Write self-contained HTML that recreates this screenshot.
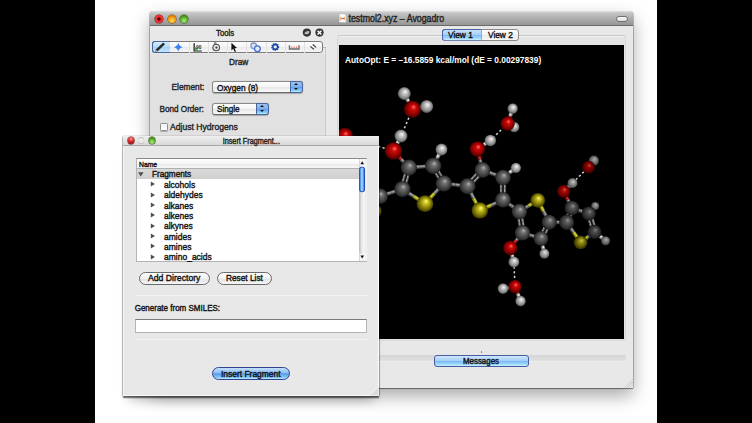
<!DOCTYPE html>
<html><head><meta charset="utf-8">
<style>
*{margin:0;padding:0;box-sizing:border-box}
html,body{width:752px;height:423px;overflow:hidden;background:#000}
body{position:relative;font-family:"Liberation Sans",sans-serif;color:#000}
.a{position:absolute}
#stage{left:95px;top:0;width:562px;height:423px;background:#fff;overflow:hidden}
.t{position:absolute;white-space:nowrap;line-height:1;-webkit-text-stroke:0.35px currentColor;color:#111;transform:scaleY(1.14);transform-origin:0 85%}
.win{position:absolute;left:150px;top:11px;width:483.3px;height:377px;background:#e8e8e8;box-shadow:0 1px 1px rgba(0,0,0,.35),0 8px 18px rgba(0,0,0,.34),-.6px 0 0 rgba(0,0,0,.35),.6px 0 0 rgba(0,0,0,.35),0 .6px 0 rgba(0,0,0,.35);border-radius:4px 4px 0 0}
.title{position:absolute;left:0;top:0;width:100%;height:14.5px;background:linear-gradient(#e0e0e0,#c4c4c4 15%,#aaaaaa 60%,#969696);border-bottom:1.5px solid #6a6a6a;border-radius:4px 4px 0 0}
.btn{position:absolute;width:9px;height:9px;border-radius:50%}
.red{background:radial-gradient(circle at 50% 30%,#ffd0c8 0,#f05050 22%,#d01818 55%,#900000 85%,#600000 100%);box-shadow:0 0 0 .6px #6a2020}
.orn{background:radial-gradient(circle at 50% 70%,#ffe060 0,#f8b020 35%,#e08000 70%,#a05000 100%);box-shadow:0 0 0 .6px #7a4a10}
.grn{background:radial-gradient(circle at 50% 70%,#b0f080 0,#70c040 35%,#409010 70%,#205800 100%);box-shadow:0 0 0 .6px #2a5a10}
.gry{background:radial-gradient(circle at 50% 40%,#f4f4f4 0,#e0e0e0 60%,#c0c0c0 100%);box-shadow:0 0 0 .6px #9a9a9a}
.dlg{position:absolute;left:123.3px;top:136px;width:255.3px;height:260px;background:#e8e8e8;box-shadow:inset 0 -1px 0 #f8f8f8,inset 1px 0 0 #f4f4f4,inset -1.2px 0 0 #fbfbfb,0 1.5px 1.2px rgba(0,0,0,.6),0 11px 10px -6px rgba(0,0,0,.22),-.7px 0 0 rgba(0,0,0,.25),.7px 0 0 rgba(0,0,0,.3),0 -.5px 0 rgba(0,0,0,.15)}
.dtitle{position:absolute;left:0;top:0;width:100%;height:10px;background:linear-gradient(#f0f0f0,#d8d8d8);border-bottom:1px solid #a8a8a8}
.pbtn{position:absolute;border:1px solid #6a6a6a;border-radius:7px;background:linear-gradient(#fff,#f0f0f0 50%,#e2e2e2 51%,#f6f6f6);}
.bbtn{position:absolute;border:1px solid #34448e;border-radius:7px;background:linear-gradient(#c4e0fc,#8cbef4 45%,#5c9ae6 52%,#7cc0f6 80%,#b4ecff);}
.sep{position:absolute;height:1px;background:#c8c8c8;border-bottom:1px solid #f4f4f4}
.blue{background:linear-gradient(#9cc4f4,#7eb0ec 45%,#5c9ae6 50%,#88ccf8 85%,#c0f4ff)}
.arr{position:absolute;width:0;height:0;border-left:2px solid transparent;border-right:2px solid transparent}
</style></head><body>
<div class="a" id="stage"></div>

<!-- main window -->
<div class="win">
  <div class="title"></div>
  <div class="btn red" style="left:5px;top:3.6px;width:8px;height:8px;background:radial-gradient(circle at 50% 50%,#300000 0,#500000 18%,#e02020 38%,#ff4040 55%,#c00000 80%,#800000 100%)"></div>
  <div class="btn orn" style="left:17.5px;top:3.6px;width:8px;height:8px"></div>
  <div class="btn grn" style="left:30.3px;top:3.6px;width:8px;height:8px"></div>
  <div class="a" style="left:466px;top:4.6px;width:12px;height:6px;border:1px solid #707070;border-radius:3px;background:linear-gradient(#fafafa,#dcdcdc)"></div>
  <svg class="a" style="left:189px;top:3px" width="8" height="9" viewBox="0 0 8 9"><path d="M.4 0 H5.4 L7 1.6 V8.2 H.4Z" fill="#fafafa" stroke="#c8c8c8" stroke-width=".4"/><path d="M1.2 2.5 L3.7 4.6 L6.2 2.5 L6.2 6.6 L3.7 4.6 L1.2 6.6Z" fill="#f0a060"/><path d="M3 3.4 L3.7 4.6 L4.4 3.4 L4.6 5.8 L3.7 4.6 L2.8 5.8Z" fill="#555"/></svg>
  <div class="t" style="left:198.5px;top:3.5px;font-size:8.8px;color:#222">testmol2.xyz – Avogadro</div>
  <div class="a" style="left:0;top:43px;width:174.6px;height:334px;background:#e1e1e1"></div><div class="a" style="left:174.8px;top:35.5px;width:1px;height:341.5px;background:#cbcbcb"></div><div class="a" style="left:173px;top:35.5px;width:2.5px;height:1px;background:#b8b8b8"></div>
</div>

<!-- tools panel -->
<div class="t" style="left:216px;top:30px;font-size:7.8px;color:#222">Tools</div>
<svg class="a" style="left:298px;top:26px" width="30" height="14" viewBox="298 26 30 14">
 <circle cx="306.9" cy="32.6" r="4.1" fill="#333"/>
 <path d="M304.3 33.6 q1-2.8 4.6-2.6 q1.4.8-.2 2.4 q-2.4 1.6-4.4.2z" fill="#bbb"/>
 <circle cx="319.5" cy="32.6" r="4.1" fill="#333"/>
 <path d="M317.6 30.7 L321.4 34.5 M321.4 30.7 L317.6 34.5" stroke="#fff" stroke-width="1.5"/>
</svg>
<div class="a" style="left:152px;top:41.2px;width:171px;height:12px;border:1px solid #7a7a7a;border-radius:3px;background:linear-gradient(#fdfdfd,#f4f4f4 50%,#ebebeb 51%,#f6f6f6)"></div>
<div class="a" style="left:152px;top:41.2px;width:18.3px;height:12px;border:1px solid #4a64a0;border-right:0;border-radius:3px 0 0 3px;background:linear-gradient(#d8ecff,#b4dafc 50%,#a0d0fa 51%,#c4e6fe)"></div>
<svg class="a" style="left:150px;top:38px" width="180" height="18" viewBox="150 38 180 18">
 <g stroke="#e2e2e2" stroke-width="1"><line x1="189.5" y1="42" x2="189.5" y2="53"/><line x1="208.5" y1="42" x2="208.5" y2="53"/><line x1="227.5" y1="42" x2="227.5" y2="53"/><line x1="246.5" y1="42" x2="246.5" y2="53"/><line x1="266.5" y1="42" x2="266.5" y2="53"/><line x1="285.5" y1="42" x2="285.5" y2="53"/><line x1="304.5" y1="42" x2="304.5" y2="53"/></g>
 <!-- pencil -->
 <path d="M163.2 42.4 L165 44.2 L157.6 51.2 L155.2 51.9 L155.8 49.5 Z" fill="#2a2a2a"/><path d="M155.8 49.5 L157.6 51.2 L155.2 51.9Z" fill="#c8b8a0"/>
 <!-- star -->
 <path d="M178.3 42.6 Q179 46.5 182.8 47.2 Q179 47.9 178.3 51.6 Q177.6 47.9 173.8 47.2 Q177.6 46.5 178.3 42.6Z" fill="#3a86f0"/>
 <!-- angle -->
 <path d="M193.5 51.6 L193.5 43.2 L194.8 43.2 L194.8 50.4 L201.8 50.4 L201.8 51.6Z" fill="#222"/>
 <path d="M194.8 50.4 L194.8 46.5 L198.5 50.4Z" fill="#3cb040"/>
 <text x="196" y="48.6" font-size="4.8" font-family="Liberation Sans" font-weight="bold" fill="#222">90</text>
 <!-- rotate hand -->
 <path d="M214.6 46 L214.6 42.6 Q215.3 41.9 216 42.6 L216 45" fill="#d8d8c8" stroke="#6a6a60" stroke-width=".9"/>
 <circle cx="216.2" cy="47.5" r="3.3" fill="#e6e6e6" stroke="#4a4a4a" stroke-width="1.1"/>
 <circle cx="216.4" cy="47.6" r="1.1" fill="#333"/>
 <!-- arrow -->
 <path d="M231.4 42.8 L231.4 50.4 L233.2 48.8 L234.8 52 L236 51.4 L234.6 48.3 L237 48.1 Z" fill="#111"/>
 <!-- navigate -->
 <circle cx="253.7" cy="45.8" r="2.8" fill="#dfe2f2" stroke="#8a94c8" stroke-width="1.3"/>
 <circle cx="257.4" cy="48.7" r="2.9" fill="#e4e8f6" stroke="#3a6ed8" stroke-width="1.3"/>
 <!-- gear -->
 <circle cx="275.2" cy="46.9" r="2.9" fill="none" stroke="#1a48a8" stroke-width="2.2" stroke-dasharray="1.2 .7"/>
 <circle cx="275.2" cy="46.9" r="2.4" fill="none" stroke="#1a48a8" stroke-width="1.4"/>
 <!-- ruler -->
 <path d="M289.4 45.2 L289.4 49 L299 49 L299 45.2" fill="none" stroke="#6a6a6a" stroke-width="1.3"/>
 <path d="M291.8 46.4 v1.8 M294.2 46.4 v1.8 M296.6 46.4 v1.8" stroke="#e05050" stroke-width=".8"/>
 <!-- bonds -->
 <path d="M310.4 46.4 L313.9 49.4 M312.7 44.4 L316 47.4" stroke="#333" stroke-width="1.2"/>
</svg>
<div class="t" style="left:229px;top:58px;font-size:8.3px;color:#222">Draw</div>

<div class="t" style="left:171.5px;top:83px;font-size:8.3px;color:#222">Element:</div>
<div class="a" style="left:212px;top:81.3px;width:91px;height:12px;border:1px solid #8a8a8a;border-bottom-color:#6a6a6a;border-radius:3px;box-shadow:0 .8px 1px rgba(0,0,0,.25);background:linear-gradient(#fff,#f4f4f4 50%,#e8e8e8 55%,#fafafa)"></div>
<div class="a blue" style="left:290.2px;top:81.3px;width:12.8px;height:12px;border:1px solid #4a64a0;border-radius:0 3px 3px 0"></div>
<div class="arr" style="left:294.4px;top:83.4px;border-bottom:2.6px solid #111"></div>
<div class="arr" style="left:294.4px;top:88.4px;border-top:2.6px solid #111"></div>
<div class="t" style="left:217px;top:83.6px;font-size:8.3px;color:#111">Oxygen (8)</div>

<div class="t" style="left:159.6px;top:105.5px;font-size:8.15px;color:#222">Bond Order:</div>
<div class="a" style="left:212px;top:102.6px;width:57.2px;height:12.6px;border:1px solid #8a8a8a;border-bottom-color:#6a6a6a;border-radius:3px;box-shadow:0 .8px 1px rgba(0,0,0,.25);background:linear-gradient(#fff,#f4f4f4 50%,#e8e8e8 55%,#fafafa)"></div>
<div class="a blue" style="left:256.1px;top:102.6px;width:13.1px;height:12.6px;border:1px solid #4a64a0;border-radius:0 3px 3px 0"></div>
<div class="arr" style="left:260.3px;top:105px;border-bottom:2.6px solid #111"></div>
<div class="arr" style="left:260.3px;top:110.4px;border-top:2.6px solid #111"></div>
<div class="t" style="left:217px;top:105.6px;font-size:8.1px;color:#111">Single</div>

<div class="a" style="left:159.6px;top:122.5px;width:8.3px;height:8.5px;border:1px solid #8e8e8e;border-radius:1.5px;box-shadow:0 .6px .8px rgba(0,0,0,.25);background:linear-gradient(#f4f4f4,#fdfdfd)"></div>
<div class="t" style="left:170px;top:123px;font-size:8.6px;color:#222">Adjust Hydrogens</div>

<!-- view frame -->
<div class="a" style="left:337px;top:35px;width:289px;height:306px;border:1px solid #d8d8d8;border-top-color:#c8c8c8;border-radius:3px;background:#e4e4e4;box-shadow:inset 0 1px 0 #f2f2f2"></div>
<div class="a" style="left:339px;top:45px;width:285px;height:294px;background:#000"></div>
<!-- tabs -->
<div class="a" style="left:442px;top:29px;width:77px;height:12.2px;border:1px solid #8a8a8a;border-radius:3px;background:linear-gradient(#fff,#f4f4f4 50%,#eaeaea 51%,#f8f8f8)"></div>
<div class="a" style="left:442px;top:29px;width:38.8px;height:12.2px;border:1px solid #4a64a0;border-right:0;border-bottom-color:#7080b0;border-radius:3px 0 0 3px;background:linear-gradient(#c8e2fc,#a8d0f8 45%,#84bcf4 55%,#a8dcfc 85%,#c8f0ff)"></div><div class="a" style="left:480.5px;top:30px;width:1px;height:10.2px;background:#9ab"></div>
<div class="t" style="left:448px;top:31px;font-size:8.3px;color:#111">View 1</div>
<div class="t" style="left:488px;top:31px;font-size:8.3px;color:#111">View 2</div>

<div class="t" style="left:345px;top:55.6px;font-size:8.35px;font-weight:bold;color:#fff;-webkit-text-stroke:0">AutoOpt: E = –16.5859 kcal/mol (dE = 0.00297839)</div>
<svg width="285" height="294" viewBox="339 45 285 294" style="position:absolute;left:339px;top:45px">
<defs>
<radialGradient id="gC" cx="0.5" cy="0.5" r="0.5" fx="0.58" fy="0.34"><stop offset="0" stop-color="#b4b4b4"/><stop offset="0.3" stop-color="#6e6e6e"/><stop offset="0.8" stop-color="#3a3a3a"/><stop offset="1" stop-color="#1e1e1e"/></radialGradient>
<radialGradient id="gO" cx="0.5" cy="0.5" r="0.5" fx="0.58" fy="0.34"><stop offset="0" stop-color="#ff7070"/><stop offset="0.3" stop-color="#d00808"/><stop offset="0.8" stop-color="#7a0000"/><stop offset="1" stop-color="#3a0000"/></radialGradient>
<radialGradient id="gH" cx="0.5" cy="0.5" r="0.5" fx="0.58" fy="0.34"><stop offset="0" stop-color="#f8f8f8"/><stop offset="0.3" stop-color="#cccccc"/><stop offset="0.8" stop-color="#848484"/><stop offset="1" stop-color="#4a4a4a"/></radialGradient>
<radialGradient id="gS" cx="0.5" cy="0.5" r="0.5" fx="0.58" fy="0.34"><stop offset="0" stop-color="#ffff80"/><stop offset="0.3" stop-color="#c8c020"/><stop offset="0.8" stop-color="#6a6400"/><stop offset="1" stop-color="#3a3600"/></radialGradient>
</defs>
<linearGradient id="b1" gradientUnits="userSpaceOnUse" x1="412.23" y1="104.43" x2="408.67" y2="106.27"><stop offset="0" stop-color="#500000"/><stop offset="0.35" stop-color="#e83030"/><stop offset="1" stop-color="#500000"/></linearGradient>
<line x1="412.5" y1="109.3" x2="408.4" y2="101.4" stroke="url(#b1)" stroke-width="4.0"/>
<linearGradient id="b2" gradientUnits="userSpaceOnUse" x1="408.13" y1="96.53" x2="404.57" y2="98.37"><stop offset="0" stop-color="#606060"/><stop offset="0.35" stop-color="#f0f0f0"/><stop offset="1" stop-color="#606060"/></linearGradient>
<line x1="408.4" y1="101.4" x2="404.3" y2="93.5" stroke="url(#b2)" stroke-width="4.0"/>
<linearGradient id="b3" gradientUnits="userSpaceOnUse" x1="415.65" y1="106.62" x2="416.45" y2="110.53"><stop offset="0" stop-color="#500000"/><stop offset="0.35" stop-color="#e83030"/><stop offset="1" stop-color="#500000"/></linearGradient>
<line x1="412.5" y1="109.3" x2="419.6" y2="107.8" stroke="url(#b3)" stroke-width="4.0"/>
<linearGradient id="b4" gradientUnits="userSpaceOnUse" x1="422.75" y1="105.17" x2="423.55" y2="109.08"><stop offset="0" stop-color="#606060"/><stop offset="0.35" stop-color="#f0f0f0"/><stop offset="1" stop-color="#606060"/></linearGradient>
<line x1="419.6" y1="107.8" x2="426.7" y2="106.4" stroke="url(#b4)" stroke-width="4.0"/>
<linearGradient id="b5" gradientUnits="userSpaceOnUse" x1="393.52" y1="146.35" x2="397.08" y2="148.15"><stop offset="0" stop-color="#500000"/><stop offset="0.35" stop-color="#e83030"/><stop offset="1" stop-color="#500000"/></linearGradient>
<line x1="393.4" y1="151.0" x2="397.2" y2="143.5" stroke="url(#b5)" stroke-width="4.0"/>
<linearGradient id="b6" gradientUnits="userSpaceOnUse" x1="397.32" y1="138.85" x2="400.88" y2="140.65"><stop offset="0" stop-color="#606060"/><stop offset="0.35" stop-color="#f0f0f0"/><stop offset="1" stop-color="#606060"/></linearGradient>
<line x1="397.2" y1="143.5" x2="401.0" y2="136.0" stroke="url(#b6)" stroke-width="4.0"/>
<linearGradient id="b7" gradientUnits="userSpaceOnUse" x1="398.74" y1="153.79" x2="395.81" y2="156.51"><stop offset="0" stop-color="#500000"/><stop offset="0.35" stop-color="#e83030"/><stop offset="1" stop-color="#500000"/></linearGradient>
<line x1="393.4" y1="151.0" x2="401.1" y2="159.3" stroke="url(#b7)" stroke-width="4.0"/>
<linearGradient id="b8" gradientUnits="userSpaceOnUse" x1="406.49" y1="162.09" x2="403.56" y2="164.81"><stop offset="0" stop-color="#262626"/><stop offset="0.35" stop-color="#a8a8a8"/><stop offset="1" stop-color="#262626"/></linearGradient>
<line x1="401.1" y1="159.3" x2="408.9" y2="167.6" stroke="url(#b8)" stroke-width="4.0"/>
<linearGradient id="b9" gradientUnits="userSpaceOnUse" x1="414.83" y1="165.16" x2="415.12" y2="169.14"><stop offset="0" stop-color="#262626"/><stop offset="0.35" stop-color="#a8a8a8"/><stop offset="1" stop-color="#262626"/></linearGradient>
<line x1="408.9" y1="167.6" x2="421.0" y2="166.7" stroke="url(#b9)" stroke-width="4.0"/>
<linearGradient id="b10" gradientUnits="userSpaceOnUse" x1="426.98" y1="164.26" x2="427.27" y2="168.24"><stop offset="0" stop-color="#262626"/><stop offset="0.35" stop-color="#a8a8a8"/><stop offset="1" stop-color="#262626"/></linearGradient>
<line x1="421.0" y1="166.7" x2="433.2" y2="165.8" stroke="url(#b10)" stroke-width="4.0"/>
<linearGradient id="b11" gradientUnits="userSpaceOnUse" x1="435.55" y1="170.38" x2="433.07" y2="171.88"><stop offset="0" stop-color="#262626"/><stop offset="0.35" stop-color="#a8a8a8"/><stop offset="1" stop-color="#262626"/></linearGradient>
<line x1="431.7" y1="166.7" x2="437.0" y2="175.5" stroke="url(#b11)" stroke-width="2.9"/>
<linearGradient id="b12" gradientUnits="userSpaceOnUse" x1="440.85" y1="179.18" x2="438.37" y2="180.68"><stop offset="0" stop-color="#262626"/><stop offset="0.35" stop-color="#a8a8a8"/><stop offset="1" stop-color="#262626"/></linearGradient>
<line x1="437.0" y1="175.5" x2="442.3" y2="184.3" stroke="url(#b12)" stroke-width="2.9"/>
<linearGradient id="b13" gradientUnits="userSpaceOnUse" x1="438.63" y1="168.52" x2="436.15" y2="170.02"><stop offset="0" stop-color="#262626"/><stop offset="0.35" stop-color="#a8a8a8"/><stop offset="1" stop-color="#262626"/></linearGradient>
<line x1="434.7" y1="164.9" x2="440.0" y2="173.7" stroke="url(#b13)" stroke-width="2.9"/>
<linearGradient id="b14" gradientUnits="userSpaceOnUse" x1="443.93" y1="177.32" x2="441.45" y2="178.82"><stop offset="0" stop-color="#262626"/><stop offset="0.35" stop-color="#a8a8a8"/><stop offset="1" stop-color="#262626"/></linearGradient>
<line x1="440.0" y1="173.7" x2="445.3" y2="182.5" stroke="url(#b14)" stroke-width="2.9"/>
<linearGradient id="b15" gradientUnits="userSpaceOnUse" x1="437.64" y1="187.09" x2="440.56" y2="189.81"><stop offset="0" stop-color="#262626"/><stop offset="0.35" stop-color="#a8a8a8"/><stop offset="1" stop-color="#262626"/></linearGradient>
<line x1="443.8" y1="183.4" x2="434.4" y2="193.5" stroke="url(#b15)" stroke-width="4.0"/>
<linearGradient id="b16" gradientUnits="userSpaceOnUse" x1="428.24" y1="197.19" x2="431.16" y2="199.91"><stop offset="0" stop-color="#505000"/><stop offset="0.35" stop-color="#e0e040"/><stop offset="1" stop-color="#505000"/></linearGradient>
<line x1="434.4" y1="193.5" x2="425.0" y2="203.6" stroke="url(#b16)" stroke-width="4.0"/>
<linearGradient id="b17" gradientUnits="userSpaceOnUse" x1="420.43" y1="198.29" x2="418.27" y2="201.66"><stop offset="0" stop-color="#505000"/><stop offset="0.35" stop-color="#e0e040"/><stop offset="1" stop-color="#505000"/></linearGradient>
<line x1="425.0" y1="203.6" x2="413.7" y2="196.3" stroke="url(#b17)" stroke-width="4.0"/>
<linearGradient id="b18" gradientUnits="userSpaceOnUse" x1="409.13" y1="191.04" x2="406.97" y2="194.41"><stop offset="0" stop-color="#262626"/><stop offset="0.35" stop-color="#a8a8a8"/><stop offset="1" stop-color="#262626"/></linearGradient>
<line x1="413.7" y1="196.3" x2="402.4" y2="189.1" stroke="url(#b18)" stroke-width="4.0"/>
<linearGradient id="b19" gradientUnits="userSpaceOnUse" x1="404.36" y1="183.83" x2="407.14" y2="184.67"><stop offset="0" stop-color="#262626"/><stop offset="0.35" stop-color="#a8a8a8"/><stop offset="1" stop-color="#262626"/></linearGradient>
<line x1="404.1" y1="189.6" x2="407.4" y2="178.9" stroke="url(#b19)" stroke-width="2.9"/>
<linearGradient id="b20" gradientUnits="userSpaceOnUse" x1="407.61" y1="173.08" x2="410.39" y2="173.92"><stop offset="0" stop-color="#262626"/><stop offset="0.35" stop-color="#a8a8a8"/><stop offset="1" stop-color="#262626"/></linearGradient>
<line x1="407.4" y1="178.9" x2="410.6" y2="168.1" stroke="url(#b20)" stroke-width="2.9"/>
<linearGradient id="b21" gradientUnits="userSpaceOnUse" x1="400.91" y1="182.78" x2="403.69" y2="183.62"><stop offset="0" stop-color="#262626"/><stop offset="0.35" stop-color="#a8a8a8"/><stop offset="1" stop-color="#262626"/></linearGradient>
<line x1="400.7" y1="188.6" x2="403.9" y2="177.8" stroke="url(#b21)" stroke-width="2.9"/>
<linearGradient id="b22" gradientUnits="userSpaceOnUse" x1="404.16" y1="172.03" x2="406.94" y2="172.87"><stop offset="0" stop-color="#262626"/><stop offset="0.35" stop-color="#a8a8a8"/><stop offset="1" stop-color="#262626"/></linearGradient>
<line x1="403.9" y1="177.8" x2="407.2" y2="167.1" stroke="url(#b22)" stroke-width="2.9"/>
<linearGradient id="b23" gradientUnits="userSpaceOnUse" x1="433.49" y1="160.82" x2="437.06" y2="162.63"><stop offset="0" stop-color="#262626"/><stop offset="0.35" stop-color="#a8a8a8"/><stop offset="1" stop-color="#262626"/></linearGradient>
<line x1="433.2" y1="165.8" x2="437.4" y2="157.7" stroke="url(#b23)" stroke-width="4.0"/>
<linearGradient id="b24" gradientUnits="userSpaceOnUse" x1="437.64" y1="152.67" x2="441.21" y2="154.48"><stop offset="0" stop-color="#606060"/><stop offset="0.35" stop-color="#f0f0f0"/><stop offset="1" stop-color="#606060"/></linearGradient>
<line x1="437.4" y1="157.7" x2="441.5" y2="149.5" stroke="url(#b24)" stroke-width="4.0"/>
<linearGradient id="b25" gradientUnits="userSpaceOnUse" x1="396.20" y1="188.97" x2="397.40" y2="192.78"><stop offset="0" stop-color="#262626"/><stop offset="0.35" stop-color="#a8a8a8"/><stop offset="1" stop-color="#262626"/></linearGradient>
<line x1="402.4" y1="189.1" x2="391.2" y2="192.6" stroke="url(#b25)" stroke-width="4.0"/>
<linearGradient id="b26" gradientUnits="userSpaceOnUse" x1="385.00" y1="192.52" x2="386.20" y2="196.33"><stop offset="0" stop-color="#262626"/><stop offset="0.35" stop-color="#a8a8a8"/><stop offset="1" stop-color="#262626"/></linearGradient>
<line x1="391.2" y1="192.6" x2="380.0" y2="196.2" stroke="url(#b26)" stroke-width="4.0"/>
<linearGradient id="b27" gradientUnits="userSpaceOnUse" x1="376.54" y1="199.10" x2="380.21" y2="200.70"><stop offset="0" stop-color="#262626"/><stop offset="0.35" stop-color="#a8a8a8"/><stop offset="1" stop-color="#262626"/></linearGradient>
<line x1="380.0" y1="196.2" x2="376.8" y2="203.6" stroke="url(#b27)" stroke-width="4.0"/>
<linearGradient id="b28" gradientUnits="userSpaceOnUse" x1="373.29" y1="206.50" x2="376.96" y2="208.10"><stop offset="0" stop-color="#505000"/><stop offset="0.35" stop-color="#e0e040"/><stop offset="1" stop-color="#505000"/></linearGradient>
<line x1="376.8" y1="203.6" x2="373.5" y2="211.0" stroke="url(#b28)" stroke-width="4.0"/>
<linearGradient id="b29" gradientUnits="userSpaceOnUse" x1="449.96" y1="182.11" x2="449.49" y2="186.09"><stop offset="0" stop-color="#262626"/><stop offset="0.35" stop-color="#a8a8a8"/><stop offset="1" stop-color="#262626"/></linearGradient>
<line x1="443.8" y1="183.4" x2="455.6" y2="184.8" stroke="url(#b29)" stroke-width="4.0"/>
<linearGradient id="b30" gradientUnits="userSpaceOnUse" x1="461.81" y1="183.51" x2="461.34" y2="187.49"><stop offset="0" stop-color="#262626"/><stop offset="0.35" stop-color="#a8a8a8"/><stop offset="1" stop-color="#262626"/></linearGradient>
<line x1="455.6" y1="184.8" x2="467.5" y2="186.2" stroke="url(#b30)" stroke-width="4.0"/>
<linearGradient id="b31" gradientUnits="userSpaceOnUse" x1="471.51" y1="182.39" x2="473.63" y2="184.36"><stop offset="0" stop-color="#262626"/><stop offset="0.35" stop-color="#a8a8a8"/><stop offset="1" stop-color="#262626"/></linearGradient>
<line x1="468.8" y1="187.4" x2="476.3" y2="179.3" stroke="url(#b31)" stroke-width="2.9"/>
<linearGradient id="b32" gradientUnits="userSpaceOnUse" x1="479.01" y1="174.29" x2="481.13" y2="176.26"><stop offset="0" stop-color="#262626"/><stop offset="0.35" stop-color="#a8a8a8"/><stop offset="1" stop-color="#262626"/></linearGradient>
<line x1="476.3" y1="179.3" x2="483.8" y2="171.2" stroke="url(#b32)" stroke-width="2.9"/>
<linearGradient id="b33" gradientUnits="userSpaceOnUse" x1="468.87" y1="179.94" x2="470.99" y2="181.91"><stop offset="0" stop-color="#262626"/><stop offset="0.35" stop-color="#a8a8a8"/><stop offset="1" stop-color="#262626"/></linearGradient>
<line x1="466.2" y1="185.0" x2="473.7" y2="176.9" stroke="url(#b33)" stroke-width="2.9"/>
<linearGradient id="b34" gradientUnits="userSpaceOnUse" x1="476.37" y1="171.84" x2="478.49" y2="173.81"><stop offset="0" stop-color="#262626"/><stop offset="0.35" stop-color="#a8a8a8"/><stop offset="1" stop-color="#262626"/></linearGradient>
<line x1="473.7" y1="176.9" x2="481.2" y2="168.8" stroke="url(#b34)" stroke-width="2.9"/>
<linearGradient id="b35" gradientUnits="userSpaceOnUse" x1="488.31" y1="170.00" x2="486.94" y2="173.75"><stop offset="0" stop-color="#262626"/><stop offset="0.35" stop-color="#a8a8a8"/><stop offset="1" stop-color="#262626"/></linearGradient>
<line x1="482.5" y1="170.0" x2="492.8" y2="173.8" stroke="url(#b35)" stroke-width="4.0"/>
<linearGradient id="b36" gradientUnits="userSpaceOnUse" x1="498.56" y1="173.75" x2="497.19" y2="177.50"><stop offset="0" stop-color="#262626"/><stop offset="0.35" stop-color="#a8a8a8"/><stop offset="1" stop-color="#262626"/></linearGradient>
<line x1="492.8" y1="173.8" x2="503.0" y2="177.5" stroke="url(#b36)" stroke-width="4.0"/>
<linearGradient id="b37" gradientUnits="userSpaceOnUse" x1="499.75" y1="183.07" x2="502.65" y2="183.07"><stop offset="0" stop-color="#262626"/><stop offset="0.35" stop-color="#a8a8a8"/><stop offset="1" stop-color="#262626"/></linearGradient>
<line x1="501.2" y1="177.5" x2="501.2" y2="188.7" stroke="url(#b37)" stroke-width="2.9"/>
<linearGradient id="b38" gradientUnits="userSpaceOnUse" x1="499.75" y1="194.23" x2="502.65" y2="194.23"><stop offset="0" stop-color="#262626"/><stop offset="0.35" stop-color="#a8a8a8"/><stop offset="1" stop-color="#262626"/></linearGradient>
<line x1="501.2" y1="188.7" x2="501.2" y2="199.8" stroke="url(#b38)" stroke-width="2.9"/>
<linearGradient id="b39" gradientUnits="userSpaceOnUse" x1="503.35" y1="183.07" x2="506.25" y2="183.07"><stop offset="0" stop-color="#262626"/><stop offset="0.35" stop-color="#a8a8a8"/><stop offset="1" stop-color="#262626"/></linearGradient>
<line x1="504.8" y1="177.5" x2="504.8" y2="188.7" stroke="url(#b39)" stroke-width="2.9"/>
<linearGradient id="b40" gradientUnits="userSpaceOnUse" x1="503.35" y1="194.23" x2="506.25" y2="194.23"><stop offset="0" stop-color="#262626"/><stop offset="0.35" stop-color="#a8a8a8"/><stop offset="1" stop-color="#262626"/></linearGradient>
<line x1="504.8" y1="188.7" x2="504.8" y2="199.8" stroke="url(#b40)" stroke-width="2.9"/>
<linearGradient id="b41" gradientUnits="userSpaceOnUse" x1="496.37" y1="200.63" x2="498.03" y2="204.27"><stop offset="0" stop-color="#262626"/><stop offset="0.35" stop-color="#a8a8a8"/><stop offset="1" stop-color="#262626"/></linearGradient>
<line x1="503.0" y1="199.8" x2="491.4" y2="205.1" stroke="url(#b41)" stroke-width="4.0"/>
<linearGradient id="b42" gradientUnits="userSpaceOnUse" x1="484.77" y1="205.93" x2="486.43" y2="209.57"><stop offset="0" stop-color="#505000"/><stop offset="0.35" stop-color="#e0e040"/><stop offset="1" stop-color="#505000"/></linearGradient>
<line x1="491.4" y1="205.1" x2="479.8" y2="210.4" stroke="url(#b42)" stroke-width="4.0"/>
<linearGradient id="b43" gradientUnits="userSpaceOnUse" x1="478.51" y1="203.44" x2="474.94" y2="205.26"><stop offset="0" stop-color="#505000"/><stop offset="0.35" stop-color="#e0e040"/><stop offset="1" stop-color="#505000"/></linearGradient>
<line x1="479.8" y1="210.4" x2="473.6" y2="198.3" stroke="url(#b43)" stroke-width="4.0"/>
<linearGradient id="b44" gradientUnits="userSpaceOnUse" x1="472.36" y1="191.34" x2="468.79" y2="193.16"><stop offset="0" stop-color="#262626"/><stop offset="0.35" stop-color="#a8a8a8"/><stop offset="1" stop-color="#262626"/></linearGradient>
<line x1="473.6" y1="198.3" x2="467.5" y2="186.2" stroke="url(#b44)" stroke-width="4.0"/>
<linearGradient id="b45" gradientUnits="userSpaceOnUse" x1="483.14" y1="164.27" x2="479.26" y2="165.23"><stop offset="0" stop-color="#262626"/><stop offset="0.35" stop-color="#a8a8a8"/><stop offset="1" stop-color="#262626"/></linearGradient>
<line x1="482.5" y1="170.0" x2="479.9" y2="159.5" stroke="url(#b45)" stroke-width="4.0"/>
<linearGradient id="b46" gradientUnits="userSpaceOnUse" x1="480.54" y1="153.77" x2="476.66" y2="154.73"><stop offset="0" stop-color="#500000"/><stop offset="0.35" stop-color="#e83030"/><stop offset="1" stop-color="#500000"/></linearGradient>
<line x1="479.9" y1="159.5" x2="477.3" y2="149.0" stroke="url(#b46)" stroke-width="4.0"/>
<linearGradient id="b47" gradientUnits="userSpaceOnUse" x1="479.48" y1="145.18" x2="481.67" y2="148.52"><stop offset="0" stop-color="#500000"/><stop offset="0.35" stop-color="#e83030"/><stop offset="1" stop-color="#500000"/></linearGradient>
<line x1="477.3" y1="149.0" x2="483.9" y2="144.7" stroke="url(#b47)" stroke-width="4.0"/>
<linearGradient id="b48" gradientUnits="userSpaceOnUse" x1="486.03" y1="140.88" x2="488.22" y2="144.22"><stop offset="0" stop-color="#606060"/><stop offset="0.35" stop-color="#f0f0f0"/><stop offset="1" stop-color="#606060"/></linearGradient>
<line x1="483.9" y1="144.7" x2="490.4" y2="140.4" stroke="url(#b48)" stroke-width="4.0"/>
<linearGradient id="b49" gradientUnits="userSpaceOnUse" x1="505.02" y1="173.48" x2="507.43" y2="176.67"><stop offset="0" stop-color="#262626"/><stop offset="0.35" stop-color="#a8a8a8"/><stop offset="1" stop-color="#262626"/></linearGradient>
<line x1="503.0" y1="177.5" x2="509.4" y2="172.7" stroke="url(#b49)" stroke-width="4.0"/>
<linearGradient id="b50" gradientUnits="userSpaceOnUse" x1="511.47" y1="168.63" x2="513.88" y2="171.82"><stop offset="0" stop-color="#606060"/><stop offset="0.35" stop-color="#f0f0f0"/><stop offset="1" stop-color="#606060"/></linearGradient>
<line x1="509.4" y1="172.7" x2="515.9" y2="167.8" stroke="url(#b50)" stroke-width="4.0"/>
<linearGradient id="b51" gradientUnits="userSpaceOnUse" x1="506.98" y1="119.19" x2="510.77" y2="120.46"><stop offset="0" stop-color="#500000"/><stop offset="0.35" stop-color="#e83030"/><stop offset="1" stop-color="#500000"/></linearGradient>
<line x1="507.6" y1="123.6" x2="510.2" y2="116.0" stroke="url(#b51)" stroke-width="4.0"/>
<linearGradient id="b52" gradientUnits="userSpaceOnUse" x1="509.53" y1="111.64" x2="513.32" y2="112.91"><stop offset="0" stop-color="#606060"/><stop offset="0.35" stop-color="#f0f0f0"/><stop offset="1" stop-color="#606060"/></linearGradient>
<line x1="510.2" y1="116.0" x2="512.7" y2="108.5" stroke="url(#b52)" stroke-width="4.0"/>
<linearGradient id="b53" gradientUnits="userSpaceOnUse" x1="510.17" y1="122.67" x2="508.33" y2="126.23"><stop offset="0" stop-color="#500000"/><stop offset="0.35" stop-color="#e83030"/><stop offset="1" stop-color="#500000"/></linearGradient>
<line x1="507.6" y1="123.6" x2="510.9" y2="125.3" stroke="url(#b53)" stroke-width="4.0"/>
<linearGradient id="b54" gradientUnits="userSpaceOnUse" x1="513.47" y1="124.37" x2="511.63" y2="127.93"><stop offset="0" stop-color="#606060"/><stop offset="0.35" stop-color="#f0f0f0"/><stop offset="1" stop-color="#606060"/></linearGradient>
<line x1="510.9" y1="125.3" x2="514.2" y2="127.0" stroke="url(#b54)" stroke-width="4.0"/>
<linearGradient id="b55" gradientUnits="userSpaceOnUse" x1="508.26" y1="201.10" x2="505.94" y2="204.35"><stop offset="0" stop-color="#262626"/><stop offset="0.35" stop-color="#a8a8a8"/><stop offset="1" stop-color="#262626"/></linearGradient>
<line x1="503.0" y1="199.8" x2="511.2" y2="205.7" stroke="url(#b55)" stroke-width="4.0"/>
<linearGradient id="b56" gradientUnits="userSpaceOnUse" x1="516.46" y1="206.95" x2="514.14" y2="210.20"><stop offset="0" stop-color="#262626"/><stop offset="0.35" stop-color="#a8a8a8"/><stop offset="1" stop-color="#262626"/></linearGradient>
<line x1="511.2" y1="205.7" x2="519.4" y2="211.5" stroke="url(#b56)" stroke-width="4.0"/>
<linearGradient id="b57" gradientUnits="userSpaceOnUse" x1="522.96" y1="206.99" x2="525.04" y2="210.41"><stop offset="0" stop-color="#262626"/><stop offset="0.35" stop-color="#a8a8a8"/><stop offset="1" stop-color="#262626"/></linearGradient>
<line x1="519.4" y1="211.5" x2="528.6" y2="205.9" stroke="url(#b57)" stroke-width="4.0"/>
<linearGradient id="b58" gradientUnits="userSpaceOnUse" x1="532.16" y1="201.39" x2="534.24" y2="204.81"><stop offset="0" stop-color="#505000"/><stop offset="0.35" stop-color="#e0e040"/><stop offset="1" stop-color="#505000"/></linearGradient>
<line x1="528.6" y1="205.9" x2="537.8" y2="200.3" stroke="url(#b58)" stroke-width="4.0"/>
<linearGradient id="b59" gradientUnits="userSpaceOnUse" x1="542.42" y1="204.85" x2="538.88" y2="206.70"><stop offset="0" stop-color="#505000"/><stop offset="0.35" stop-color="#e0e040"/><stop offset="1" stop-color="#505000"/></linearGradient>
<line x1="537.8" y1="200.3" x2="543.5" y2="211.2" stroke="url(#b59)" stroke-width="4.0"/>
<linearGradient id="b60" gradientUnits="userSpaceOnUse" x1="548.12" y1="215.80" x2="544.58" y2="217.65"><stop offset="0" stop-color="#262626"/><stop offset="0.35" stop-color="#a8a8a8"/><stop offset="1" stop-color="#262626"/></linearGradient>
<line x1="543.5" y1="211.2" x2="549.2" y2="222.2" stroke="url(#b60)" stroke-width="4.0"/>
<linearGradient id="b61" gradientUnits="userSpaceOnUse" x1="544.25" y1="224.81" x2="546.84" y2="226.12"><stop offset="0" stop-color="#262626"/><stop offset="0.35" stop-color="#a8a8a8"/><stop offset="1" stop-color="#262626"/></linearGradient>
<line x1="547.6" y1="221.4" x2="543.5" y2="229.5" stroke="url(#b61)" stroke-width="2.9"/>
<linearGradient id="b62" gradientUnits="userSpaceOnUse" x1="540.15" y1="232.96" x2="542.74" y2="234.27"><stop offset="0" stop-color="#262626"/><stop offset="0.35" stop-color="#a8a8a8"/><stop offset="1" stop-color="#262626"/></linearGradient>
<line x1="543.5" y1="229.5" x2="539.4" y2="237.7" stroke="url(#b62)" stroke-width="2.9"/>
<linearGradient id="b63" gradientUnits="userSpaceOnUse" x1="547.46" y1="226.43" x2="550.05" y2="227.74"><stop offset="0" stop-color="#262626"/><stop offset="0.35" stop-color="#a8a8a8"/><stop offset="1" stop-color="#262626"/></linearGradient>
<line x1="550.8" y1="223.0" x2="546.7" y2="231.2" stroke="url(#b63)" stroke-width="2.9"/>
<linearGradient id="b64" gradientUnits="userSpaceOnUse" x1="543.36" y1="234.58" x2="545.95" y2="235.89"><stop offset="0" stop-color="#262626"/><stop offset="0.35" stop-color="#a8a8a8"/><stop offset="1" stop-color="#262626"/></linearGradient>
<line x1="546.7" y1="231.2" x2="542.6" y2="239.3" stroke="url(#b64)" stroke-width="2.9"/>
<linearGradient id="b65" gradientUnits="userSpaceOnUse" x1="536.96" y1="235.16" x2="535.79" y2="238.99"><stop offset="0" stop-color="#262626"/><stop offset="0.35" stop-color="#a8a8a8"/><stop offset="1" stop-color="#262626"/></linearGradient>
<line x1="541.0" y1="238.5" x2="531.8" y2="235.7" stroke="url(#b65)" stroke-width="4.0"/>
<linearGradient id="b66" gradientUnits="userSpaceOnUse" x1="527.71" y1="232.31" x2="526.54" y2="236.14"><stop offset="0" stop-color="#262626"/><stop offset="0.35" stop-color="#a8a8a8"/><stop offset="1" stop-color="#262626"/></linearGradient>
<line x1="531.8" y1="235.7" x2="522.5" y2="232.8" stroke="url(#b66)" stroke-width="4.0"/>
<linearGradient id="b67" gradientUnits="userSpaceOnUse" x1="524.94" y1="227.01" x2="522.07" y2="227.42"><stop offset="0" stop-color="#262626"/><stop offset="0.35" stop-color="#a8a8a8"/><stop offset="1" stop-color="#262626"/></linearGradient>
<line x1="524.3" y1="232.5" x2="522.7" y2="221.9" stroke="url(#b67)" stroke-width="2.9"/>
<linearGradient id="b68" gradientUnits="userSpaceOnUse" x1="523.39" y1="216.36" x2="520.52" y2="216.77"><stop offset="0" stop-color="#262626"/><stop offset="0.35" stop-color="#a8a8a8"/><stop offset="1" stop-color="#262626"/></linearGradient>
<line x1="522.7" y1="221.9" x2="521.2" y2="211.2" stroke="url(#b68)" stroke-width="2.9"/>
<linearGradient id="b69" gradientUnits="userSpaceOnUse" x1="521.38" y1="227.53" x2="518.51" y2="227.94"><stop offset="0" stop-color="#262626"/><stop offset="0.35" stop-color="#a8a8a8"/><stop offset="1" stop-color="#262626"/></linearGradient>
<line x1="520.7" y1="233.1" x2="519.2" y2="222.4" stroke="url(#b69)" stroke-width="2.9"/>
<linearGradient id="b70" gradientUnits="userSpaceOnUse" x1="519.83" y1="216.88" x2="516.96" y2="217.29"><stop offset="0" stop-color="#262626"/><stop offset="0.35" stop-color="#a8a8a8"/><stop offset="1" stop-color="#262626"/></linearGradient>
<line x1="519.2" y1="222.4" x2="517.6" y2="211.8" stroke="url(#b70)" stroke-width="2.9"/>
<linearGradient id="b71" gradientUnits="userSpaceOnUse" x1="517.87" y1="235.34" x2="520.98" y2="237.86"><stop offset="0" stop-color="#262626"/><stop offset="0.35" stop-color="#a8a8a8"/><stop offset="1" stop-color="#262626"/></linearGradient>
<line x1="522.5" y1="232.8" x2="516.4" y2="240.4" stroke="url(#b71)" stroke-width="4.0"/>
<linearGradient id="b72" gradientUnits="userSpaceOnUse" x1="511.72" y1="242.94" x2="514.83" y2="245.46"><stop offset="0" stop-color="#500000"/><stop offset="0.35" stop-color="#e83030"/><stop offset="1" stop-color="#500000"/></linearGradient>
<line x1="516.4" y1="240.4" x2="510.2" y2="248.0" stroke="url(#b72)" stroke-width="4.0"/>
<linearGradient id="b73" gradientUnits="userSpaceOnUse" x1="513.06" y1="250.99" x2="509.19" y2="252.01"><stop offset="0" stop-color="#500000"/><stop offset="0.35" stop-color="#e83030"/><stop offset="1" stop-color="#500000"/></linearGradient>
<line x1="510.2" y1="248.0" x2="512.0" y2="255.0" stroke="url(#b73)" stroke-width="4.0"/>
<linearGradient id="b74" gradientUnits="userSpaceOnUse" x1="514.91" y1="257.99" x2="511.04" y2="259.01"><stop offset="0" stop-color="#606060"/><stop offset="0.35" stop-color="#f0f0f0"/><stop offset="1" stop-color="#606060"/></linearGradient>
<line x1="512.0" y1="255.0" x2="513.9" y2="262.0" stroke="url(#b74)" stroke-width="4.0"/>
<linearGradient id="b75" gradientUnits="userSpaceOnUse" x1="543.80" y1="241.84" x2="539.90" y2="242.71"><stop offset="0" stop-color="#262626"/><stop offset="0.35" stop-color="#a8a8a8"/><stop offset="1" stop-color="#262626"/></linearGradient>
<line x1="541.0" y1="238.5" x2="542.7" y2="246.1" stroke="url(#b75)" stroke-width="4.0"/>
<linearGradient id="b76" gradientUnits="userSpaceOnUse" x1="545.50" y1="249.39" x2="541.60" y2="250.26"><stop offset="0" stop-color="#606060"/><stop offset="0.35" stop-color="#f0f0f0"/><stop offset="1" stop-color="#606060"/></linearGradient>
<line x1="542.7" y1="246.1" x2="544.4" y2="253.6" stroke="url(#b76)" stroke-width="4.0"/>
<linearGradient id="b77" gradientUnits="userSpaceOnUse" x1="511.67" y1="285.13" x2="512.33" y2="289.07"><stop offset="0" stop-color="#500000"/><stop offset="0.35" stop-color="#e83030"/><stop offset="1" stop-color="#500000"/></linearGradient>
<line x1="515.0" y1="286.6" x2="509.0" y2="287.6" stroke="url(#b77)" stroke-width="4.0"/>
<linearGradient id="b78" gradientUnits="userSpaceOnUse" x1="505.67" y1="286.13" x2="506.33" y2="290.07"><stop offset="0" stop-color="#606060"/><stop offset="0.35" stop-color="#f0f0f0"/><stop offset="1" stop-color="#606060"/></linearGradient>
<line x1="509.0" y1="287.6" x2="503.0" y2="288.6" stroke="url(#b78)" stroke-width="4.0"/>
<linearGradient id="b79" gradientUnits="userSpaceOnUse" x1="518.26" y1="289.48" x2="514.54" y2="290.92"><stop offset="0" stop-color="#500000"/><stop offset="0.35" stop-color="#e83030"/><stop offset="1" stop-color="#500000"/></linearGradient>
<line x1="515.0" y1="286.6" x2="517.8" y2="293.8" stroke="url(#b79)" stroke-width="4.0"/>
<linearGradient id="b80" gradientUnits="userSpaceOnUse" x1="521.06" y1="296.68" x2="517.34" y2="298.12"><stop offset="0" stop-color="#606060"/><stop offset="0.35" stop-color="#f0f0f0"/><stop offset="1" stop-color="#606060"/></linearGradient>
<line x1="517.8" y1="293.8" x2="520.6" y2="301.0" stroke="url(#b80)" stroke-width="4.0"/>
<linearGradient id="b81" gradientUnits="userSpaceOnUse" x1="553.60" y1="220.25" x2="553.55" y2="224.25"><stop offset="0" stop-color="#262626"/><stop offset="0.35" stop-color="#a8a8a8"/><stop offset="1" stop-color="#262626"/></linearGradient>
<line x1="549.2" y1="222.2" x2="558.0" y2="222.3" stroke="url(#b81)" stroke-width="4.0"/>
<linearGradient id="b82" gradientUnits="userSpaceOnUse" x1="562.35" y1="220.35" x2="562.30" y2="224.35"><stop offset="0" stop-color="#262626"/><stop offset="0.35" stop-color="#a8a8a8"/><stop offset="1" stop-color="#262626"/></linearGradient>
<line x1="558.0" y1="222.3" x2="566.7" y2="222.4" stroke="url(#b82)" stroke-width="4.0"/>
<linearGradient id="b83" gradientUnits="userSpaceOnUse" x1="568.33" y1="218.92" x2="571.06" y2="219.90"><stop offset="0" stop-color="#262626"/><stop offset="0.35" stop-color="#a8a8a8"/><stop offset="1" stop-color="#262626"/></linearGradient>
<line x1="568.4" y1="223.0" x2="571.0" y2="215.8" stroke="url(#b83)" stroke-width="2.9"/>
<linearGradient id="b84" gradientUnits="userSpaceOnUse" x1="570.93" y1="211.72" x2="573.66" y2="212.70"><stop offset="0" stop-color="#262626"/><stop offset="0.35" stop-color="#a8a8a8"/><stop offset="1" stop-color="#262626"/></linearGradient>
<line x1="571.0" y1="215.8" x2="573.6" y2="208.6" stroke="url(#b84)" stroke-width="2.9"/>
<linearGradient id="b85" gradientUnits="userSpaceOnUse" x1="564.94" y1="217.70" x2="567.67" y2="218.68"><stop offset="0" stop-color="#262626"/><stop offset="0.35" stop-color="#a8a8a8"/><stop offset="1" stop-color="#262626"/></linearGradient>
<line x1="565.0" y1="221.8" x2="567.6" y2="214.6" stroke="url(#b85)" stroke-width="2.9"/>
<linearGradient id="b86" gradientUnits="userSpaceOnUse" x1="567.54" y1="210.50" x2="570.27" y2="211.48"><stop offset="0" stop-color="#262626"/><stop offset="0.35" stop-color="#a8a8a8"/><stop offset="1" stop-color="#262626"/></linearGradient>
<line x1="567.6" y1="214.6" x2="570.2" y2="207.4" stroke="url(#b86)" stroke-width="2.9"/>
<linearGradient id="b87" gradientUnits="userSpaceOnUse" x1="576.74" y1="207.47" x2="575.51" y2="211.28"><stop offset="0" stop-color="#262626"/><stop offset="0.35" stop-color="#a8a8a8"/><stop offset="1" stop-color="#262626"/></linearGradient>
<line x1="571.9" y1="208.0" x2="580.3" y2="210.8" stroke="url(#b87)" stroke-width="4.0"/>
<linearGradient id="b88" gradientUnits="userSpaceOnUse" x1="585.19" y1="210.22" x2="583.96" y2="214.03"><stop offset="0" stop-color="#262626"/><stop offset="0.35" stop-color="#a8a8a8"/><stop offset="1" stop-color="#262626"/></linearGradient>
<line x1="580.3" y1="210.8" x2="588.8" y2="213.5" stroke="url(#b88)" stroke-width="4.0"/>
<linearGradient id="b89" gradientUnits="userSpaceOnUse" x1="589.89" y1="218.20" x2="587.12" y2="219.06"><stop offset="0" stop-color="#262626"/><stop offset="0.35" stop-color="#a8a8a8"/><stop offset="1" stop-color="#262626"/></linearGradient>
<line x1="587.1" y1="214.0" x2="589.9" y2="223.2" stroke="url(#b89)" stroke-width="2.9"/>
<linearGradient id="b90" gradientUnits="userSpaceOnUse" x1="592.74" y1="227.40" x2="589.97" y2="228.26"><stop offset="0" stop-color="#262626"/><stop offset="0.35" stop-color="#a8a8a8"/><stop offset="1" stop-color="#262626"/></linearGradient>
<line x1="589.9" y1="223.2" x2="592.8" y2="232.4" stroke="url(#b90)" stroke-width="2.9"/>
<linearGradient id="b91" gradientUnits="userSpaceOnUse" x1="593.33" y1="217.14" x2="590.56" y2="218.00"><stop offset="0" stop-color="#262626"/><stop offset="0.35" stop-color="#a8a8a8"/><stop offset="1" stop-color="#262626"/></linearGradient>
<line x1="590.5" y1="213.0" x2="593.4" y2="222.2" stroke="url(#b91)" stroke-width="2.9"/>
<linearGradient id="b92" gradientUnits="userSpaceOnUse" x1="596.18" y1="226.34" x2="593.41" y2="227.20"><stop offset="0" stop-color="#262626"/><stop offset="0.35" stop-color="#a8a8a8"/><stop offset="1" stop-color="#262626"/></linearGradient>
<line x1="593.4" y1="222.2" x2="596.2" y2="231.4" stroke="url(#b92)" stroke-width="2.9"/>
<linearGradient id="b93" gradientUnits="userSpaceOnUse" x1="589.82" y1="232.93" x2="592.23" y2="236.12"><stop offset="0" stop-color="#262626"/><stop offset="0.35" stop-color="#a8a8a8"/><stop offset="1" stop-color="#262626"/></linearGradient>
<line x1="594.5" y1="231.9" x2="587.5" y2="237.2" stroke="url(#b93)" stroke-width="4.0"/>
<linearGradient id="b94" gradientUnits="userSpaceOnUse" x1="582.87" y1="238.18" x2="585.28" y2="241.37"><stop offset="0" stop-color="#505000"/><stop offset="0.35" stop-color="#e0e040"/><stop offset="1" stop-color="#505000"/></linearGradient>
<line x1="587.5" y1="237.2" x2="580.6" y2="242.4" stroke="url(#b94)" stroke-width="4.0"/>
<linearGradient id="b95" gradientUnits="userSpaceOnUse" x1="578.77" y1="236.26" x2="575.48" y2="238.54"><stop offset="0" stop-color="#505000"/><stop offset="0.35" stop-color="#e0e040"/><stop offset="1" stop-color="#505000"/></linearGradient>
<line x1="580.6" y1="242.4" x2="573.7" y2="232.4" stroke="url(#b95)" stroke-width="4.0"/>
<linearGradient id="b96" gradientUnits="userSpaceOnUse" x1="571.82" y1="226.26" x2="568.53" y2="228.54"><stop offset="0" stop-color="#262626"/><stop offset="0.35" stop-color="#a8a8a8"/><stop offset="1" stop-color="#262626"/></linearGradient>
<line x1="573.7" y1="232.4" x2="566.7" y2="222.4" stroke="url(#b96)" stroke-width="4.0"/>
<linearGradient id="b97" gradientUnits="userSpaceOnUse" x1="571.64" y1="202.96" x2="568.06" y2="204.74"><stop offset="0" stop-color="#262626"/><stop offset="0.35" stop-color="#a8a8a8"/><stop offset="1" stop-color="#262626"/></linearGradient>
<line x1="571.9" y1="208.0" x2="567.8" y2="199.7" stroke="url(#b97)" stroke-width="4.0"/>
<linearGradient id="b98" gradientUnits="userSpaceOnUse" x1="567.54" y1="194.66" x2="563.96" y2="196.44"><stop offset="0" stop-color="#500000"/><stop offset="0.35" stop-color="#e83030"/><stop offset="1" stop-color="#500000"/></linearGradient>
<line x1="567.8" y1="199.7" x2="563.7" y2="191.4" stroke="url(#b98)" stroke-width="4.0"/>
<linearGradient id="b99" gradientUnits="userSpaceOnUse" x1="564.52" y1="187.85" x2="567.28" y2="190.75"><stop offset="0" stop-color="#500000"/><stop offset="0.35" stop-color="#e83030"/><stop offset="1" stop-color="#500000"/></linearGradient>
<line x1="563.7" y1="191.4" x2="568.1" y2="187.2" stroke="url(#b99)" stroke-width="4.0"/>
<linearGradient id="b100" gradientUnits="userSpaceOnUse" x1="568.92" y1="183.65" x2="571.68" y2="186.55"><stop offset="0" stop-color="#606060"/><stop offset="0.35" stop-color="#f0f0f0"/><stop offset="1" stop-color="#606060"/></linearGradient>
<line x1="568.1" y1="187.2" x2="572.5" y2="183.0" stroke="url(#b100)" stroke-width="4.0"/>
<linearGradient id="b101" gradientUnits="userSpaceOnUse" x1="588.87" y1="210.31" x2="591.93" y2="212.89"><stop offset="0" stop-color="#262626"/><stop offset="0.35" stop-color="#a8a8a8"/><stop offset="1" stop-color="#262626"/></linearGradient>
<line x1="588.8" y1="213.5" x2="592.0" y2="209.7" stroke="url(#b101)" stroke-width="4.0"/>
<linearGradient id="b102" gradientUnits="userSpaceOnUse" x1="592.07" y1="206.51" x2="595.13" y2="209.09"><stop offset="0" stop-color="#606060"/><stop offset="0.35" stop-color="#f0f0f0"/><stop offset="1" stop-color="#606060"/></linearGradient>
<line x1="592.0" y1="209.7" x2="595.2" y2="205.9" stroke="url(#b102)" stroke-width="4.0"/>
<linearGradient id="b103" gradientUnits="userSpaceOnUse" x1="598.52" y1="232.53" x2="596.03" y2="235.67"><stop offset="0" stop-color="#262626"/><stop offset="0.35" stop-color="#a8a8a8"/><stop offset="1" stop-color="#262626"/></linearGradient>
<line x1="594.5" y1="231.9" x2="600.0" y2="236.3" stroke="url(#b103)" stroke-width="4.0"/>
<linearGradient id="b104" gradientUnits="userSpaceOnUse" x1="604.07" y1="236.93" x2="601.58" y2="240.07"><stop offset="0" stop-color="#606060"/><stop offset="0.35" stop-color="#f0f0f0"/><stop offset="1" stop-color="#606060"/></linearGradient>
<line x1="600.0" y1="236.3" x2="605.6" y2="240.7" stroke="url(#b104)" stroke-width="4.0"/>
<linearGradient id="b105" gradientUnits="userSpaceOnUse" x1="588.30" y1="164.28" x2="591.40" y2="166.82"><stop offset="0" stop-color="#500000"/><stop offset="0.35" stop-color="#e83030"/><stop offset="1" stop-color="#500000"/></linearGradient>
<line x1="588.5" y1="167.2" x2="591.2" y2="163.9" stroke="url(#b105)" stroke-width="4.0"/>
<linearGradient id="b106" gradientUnits="userSpaceOnUse" x1="591.00" y1="160.98" x2="594.10" y2="163.52"><stop offset="0" stop-color="#606060"/><stop offset="0.35" stop-color="#f0f0f0"/><stop offset="1" stop-color="#606060"/></linearGradient>
<line x1="591.2" y1="163.9" x2="593.9" y2="160.6" stroke="url(#b106)" stroke-width="4.0"/>
<line x1="412.5" y1="109.3" x2="401.0" y2="136.0" stroke="#d8d8d8" stroke-width="1.5" stroke-dasharray="2.2 2.4"/>
<line x1="507.6" y1="123.6" x2="490.4" y2="140.4" stroke="#d8d8d8" stroke-width="1.5" stroke-dasharray="2.2 2.4"/>
<line x1="513.9" y1="262.0" x2="515.0" y2="286.6" stroke="#d8d8d8" stroke-width="1.5" stroke-dasharray="2.2 2.4"/>
<line x1="572.5" y1="183.0" x2="588.5" y2="167.2" stroke="#d8d8d8" stroke-width="1.5" stroke-dasharray="2.2 2.4"/>
<line x1="393.4" y1="151.0" x2="344.8" y2="136.0" stroke="#d8d8d8" stroke-width="1.5" stroke-dasharray="2.2 2.4"/>
<circle cx="514.2" cy="127.0" r="5.16" fill="url(#gH)"/>
<circle cx="595.2" cy="205.9" r="4.02" fill="url(#gH)"/>
<circle cx="595.2" cy="205.9" r="4.22" fill="#000" opacity="0.29"/>
<circle cx="404.3" cy="93.5" r="6.48" fill="url(#gH)"/>
<circle cx="412.5" cy="109.3" r="8.58" fill="url(#gO)"/>
<circle cx="426.7" cy="106.4" r="6.48" fill="url(#gH)"/>
<circle cx="401.0" cy="136.0" r="6.48" fill="url(#gH)"/>
<circle cx="393.4" cy="151.0" r="8.80" fill="url(#gO)"/>
<circle cx="344.8" cy="136.0" r="8.25" fill="url(#gO)"/>
<circle cx="380.0" cy="196.2" r="7.88" fill="url(#gC)"/>
<circle cx="373.5" cy="211.0" r="7.98" fill="url(#gS)"/>
<circle cx="408.9" cy="167.6" r="8.10" fill="url(#gC)"/>
<circle cx="433.2" cy="165.8" r="8.10" fill="url(#gC)"/>
<circle cx="441.5" cy="149.5" r="5.94" fill="url(#gH)"/>
<circle cx="443.8" cy="183.4" r="8.10" fill="url(#gC)"/>
<circle cx="402.4" cy="189.1" r="8.10" fill="url(#gC)"/>
<circle cx="425.0" cy="203.6" r="8.40" fill="url(#gS)"/>
<circle cx="477.3" cy="149.0" r="7.77" fill="url(#gO)"/>
<circle cx="490.4" cy="140.4" r="5.77" fill="url(#gH)"/>
<circle cx="482.5" cy="170.0" r="7.92" fill="url(#gC)"/>
<circle cx="503.0" cy="177.5" r="7.80" fill="url(#gC)"/>
<circle cx="515.9" cy="167.8" r="5.15" fill="url(#gH)"/>
<circle cx="503.0" cy="199.8" r="7.80" fill="url(#gC)"/>
<circle cx="467.5" cy="186.2" r="8.00" fill="url(#gC)"/>
<circle cx="479.8" cy="210.4" r="8.22" fill="url(#gS)"/>
<circle cx="512.7" cy="108.5" r="5.16" fill="url(#gH)"/>
<circle cx="507.6" cy="123.6" r="7.18" fill="url(#gO)"/>
<circle cx="537.8" cy="200.3" r="7.39" fill="url(#gS)"/>
<circle cx="537.8" cy="200.3" r="7.59" fill="#000" opacity="0.04"/>
<circle cx="519.4" cy="211.5" r="7.71" fill="url(#gC)"/>
<circle cx="522.5" cy="232.8" r="7.69" fill="url(#gC)"/>
<circle cx="510.2" cy="248.0" r="7.16" fill="url(#gO)"/>
<circle cx="513.9" cy="262.0" r="5.47" fill="url(#gH)"/>
<circle cx="541.0" cy="238.5" r="7.38" fill="url(#gC)"/>
<circle cx="541.0" cy="238.5" r="7.58" fill="#000" opacity="0.05"/>
<circle cx="544.4" cy="253.6" r="5.04" fill="url(#gH)"/>
<circle cx="544.4" cy="253.6" r="5.24" fill="#000" opacity="0.06"/>
<circle cx="549.2" cy="222.2" r="7.54" fill="url(#gC)"/>
<circle cx="549.2" cy="222.2" r="7.74" fill="#000" opacity="0.09"/>
<circle cx="515.0" cy="286.6" r="6.72" fill="url(#gO)"/>
<circle cx="503.0" cy="288.6" r="5.30" fill="url(#gH)"/>
<circle cx="520.6" cy="301.0" r="5.24" fill="url(#gH)"/>
<circle cx="566.7" cy="222.4" r="7.53" fill="url(#gC)"/>
<circle cx="566.7" cy="222.4" r="7.73" fill="#000" opacity="0.17"/>
<circle cx="571.9" cy="208.0" r="7.33" fill="url(#gC)"/>
<circle cx="571.9" cy="208.0" r="7.53" fill="#000" opacity="0.19"/>
<circle cx="563.7" cy="191.4" r="6.65" fill="url(#gO)"/>
<circle cx="563.7" cy="191.4" r="6.85" fill="#000" opacity="0.15"/>
<circle cx="572.5" cy="183.0" r="5.02" fill="url(#gH)"/>
<circle cx="572.5" cy="183.0" r="5.22" fill="#000" opacity="0.19"/>
<circle cx="593.9" cy="160.6" r="5.02" fill="url(#gH)"/>
<circle cx="593.9" cy="160.6" r="5.22" fill="#000" opacity="0.29"/>
<circle cx="588.5" cy="167.2" r="6.34" fill="url(#gO)"/>
<circle cx="588.5" cy="167.2" r="6.54" fill="#000" opacity="0.26"/>
<circle cx="588.8" cy="213.5" r="7.03" fill="url(#gC)"/>
<circle cx="588.8" cy="213.5" r="7.23" fill="#000" opacity="0.26"/>
<circle cx="594.5" cy="231.9" r="7.03" fill="url(#gC)"/>
<circle cx="594.5" cy="231.9" r="7.23" fill="#000" opacity="0.29"/>
<circle cx="605.6" cy="240.7" r="4.52" fill="url(#gH)"/>
<circle cx="605.6" cy="240.7" r="4.72" fill="#000" opacity="0.30"/>
<circle cx="580.6" cy="242.4" r="6.84" fill="url(#gS)"/>
<circle cx="580.6" cy="242.4" r="7.04" fill="#000" opacity="0.23"/>
</svg>

<!-- bottom band -->
<div class="a" style="left:339px;top:355px;width:286.7px;height:5.8px;background:linear-gradient(#d6d6d6,#e0e0e0);border-radius:1.5px;box-shadow:0 .5px 0 #f2f2f2"></div>
<div class="a" style="left:480.5px;top:351px;width:1.5px;height:1.5px;background:#777;border-radius:50%"></div>
<div class="a" style="left:434px;top:354.6px;width:94.8px;height:12.6px;border-radius:3px;border:1px solid #4a5ca0;background:linear-gradient(#d0e8ff,#a4d0fa 45%,#7cb8f2 52%,#9cd8fa 80%,#c4f0ff)"></div>
<div class="t" style="left:463px;top:358px;font-size:7.9px;color:#111">Messages</div>

<svg class="a" style="left:624px;top:378px" width="10" height="10" viewBox="624 378 10 10"><path d="M625 387.5 L633 379.5 M627.5 387.5 L633 382 M630 387.5 L633 384.5" stroke="#a8a8a8" stroke-width=".8"/><path d="M625.8 387.5 L633 380.3 M628.3 387.5 L633 382.8 M630.8 387.5 L633 385.3" stroke="#fafafa" stroke-width=".6"/></svg>
<!-- insert fragment dialog -->
<div class="dlg">
  <div class="dtitle"></div>
  <div class="btn red" style="left:4.4px;top:1.4px;width:6.6px;height:6.6px"></div>
  <div class="btn gry" style="left:14.6px;top:1.4px;width:6.6px;height:6.6px;background:radial-gradient(circle,#ececec 0,#e6e6e6 55%,#a8a8a8 75%,#c8c8c8 100%);box-shadow:none"></div>
  <div class="btn grn" style="left:25.5px;top:1.4px;width:6.6px;height:6.6px"></div>
  <div class="t" style="left:99.4px;top:1.5px;font-size:7.26px;color:#222">Insert Fragment...</div>
</div>

<!-- list -->
<div class="a" style="left:136px;top:158px;width:230.5px;height:103.5px;background:#fff;border:1px solid #b4b4b4;border-top-color:#8a8a8a"></div>
<div class="a" style="left:137px;top:159px;width:221.5px;height:10.2px;background:linear-gradient(#fff,#f6f6f6 50%,#e8e8e8 55%,#f8f8f8);border-bottom:1px solid #b0b0b0"></div>
<div class="t" style="left:139px;top:162.1px;font-size:6.8px;color:#111">Name</div>
<div class="a" style="left:137px;top:169.2px;width:221.5px;height:9.8px;background:linear-gradient(#dadada,#d0d0d0)"></div>
<div class="t" style="left:152px;top:171.2px;font-size:8.2px;color:#111">Fragments</div>
<svg class="a" style="left:137px;top:171px" width="8" height="7"><path d="M1 1.2 L6.6 1.2 L3.8 5.6Z" fill="#505050"/></svg>
<svg class="a" style="left:150px;top:180.2px" width="6" height="8"><path d="M.8 1.6 L5 4 L.8 6.4Z" fill="#505050"/></svg>
<div class="t" style="left:164px;top:180.9px;font-size:8.5px;color:#111">alcohols</div>
<svg class="a" style="left:150px;top:190.5px" width="6" height="8"><path d="M.8 1.6 L5 4 L.8 6.4Z" fill="#505050"/></svg>
<div class="t" style="left:164px;top:191.2px;font-size:8.5px;color:#111">aldehydes</div>
<svg class="a" style="left:150px;top:200.9px" width="6" height="8"><path d="M.8 1.6 L5 4 L.8 6.4Z" fill="#505050"/></svg>
<div class="t" style="left:164px;top:201.6px;font-size:8.5px;color:#111">alkanes</div>
<svg class="a" style="left:150px;top:211.2px" width="6" height="8"><path d="M.8 1.6 L5 4 L.8 6.4Z" fill="#505050"/></svg>
<div class="t" style="left:164px;top:211.9px;font-size:8.5px;color:#111">alkenes</div>
<svg class="a" style="left:150px;top:221.5px" width="6" height="8"><path d="M.8 1.6 L5 4 L.8 6.4Z" fill="#505050"/></svg>
<div class="t" style="left:164px;top:222.2px;font-size:8.5px;color:#111">alkynes</div>
<svg class="a" style="left:150px;top:231.8px" width="6" height="8"><path d="M.8 1.6 L5 4 L.8 6.4Z" fill="#505050"/></svg>
<div class="t" style="left:164px;top:232.5px;font-size:8.5px;color:#111">amides</div>
<svg class="a" style="left:150px;top:242.2px" width="6" height="8"><path d="M.8 1.6 L5 4 L.8 6.4Z" fill="#505050"/></svg>
<div class="t" style="left:164px;top:242.9px;font-size:8.5px;color:#111">amines</div>
<svg class="a" style="left:150px;top:252.5px" width="6" height="8"><path d="M.8 1.6 L5 4 L.8 6.4Z" fill="#505050"/></svg>
<div class="t" style="left:164px;top:253.2px;font-size:8.5px;color:#111">amino_acids</div>

<!-- scrollbar -->
<div class="a" style="left:358.5px;top:159px;width:8px;height:102px;background:#f4f4f4;border-left:1px solid #d8d8d8"></div>
<div class="a" style="left:359px;top:166px;width:6.5px;height:88px;border-radius:3.2px;background:linear-gradient(90deg,#b8b8b8,#e4e4e4 35%,#f8f8f8 70%,#e6e6e6)"></div>
<svg class="a" style="left:358px;top:159px" width="9" height="102" viewBox="358 159 9 102">
 <path d="M360.4 164.3 L364 164.3 L362.2 161.2Z" fill="#111"/>
 <path d="M360.3 255.6 L364.1 255.6 L362.2 258.6Z" fill="#111"/>
 <rect x="359.1" y="166.8" width="5.9" height="25.5" rx="2.95" fill="#1c48b8"/>
 <rect x="359.9" y="167.6" width="4.3" height="23.9" rx="2.15" fill="url(#thumbg)"/>
 <defs><linearGradient id="thumbg" x1="0" x2="1" y1="0" y2="0"><stop offset="0" stop-color="#3a78e0"/><stop offset=".45" stop-color="#a8e0ff"/><stop offset=".7" stop-color="#78b8f8"/><stop offset="1" stop-color="#3470d8"/></linearGradient></defs>
</svg>

<div class="pbtn" style="left:139px;top:272px;width:71px;height:12.5px"></div>
<div class="t" style="left:148px;top:274px;font-size:8.67px;color:#111">Add Directory</div>
<div class="pbtn" style="left:217px;top:272px;width:55px;height:12.5px"></div>
<div class="t" style="left:226px;top:274px;font-size:8.3px;color:#111">Reset List</div>

<div class="sep" style="left:135.5px;top:295px;width:231.5px"></div>
<div class="t" style="left:134.7px;top:305px;font-size:8px;color:#111">Generate from SMILES:</div>
<div class="a" style="left:135px;top:319px;width:232px;height:13.5px;background:#fff;border:1px solid #b4b4b4;border-top-color:#7a7a7a"></div>
<div class="sep" style="left:135.5px;top:339px;width:231.5px"></div>

<div class="bbtn" style="left:211.8px;top:367px;width:78.3px;height:13.1px"></div>
<div class="t" style="left:221px;top:369.8px;font-size:8.45px;color:#111">Insert Fragment</div>
<svg class="a" style="left:369px;top:386px" width="10" height="10" viewBox="369 386 10 10"><path d="M369.5 395.5 L378.5 386.5 L378.5 395.5Z" fill="#dcdcdc"/><path d="M369.5 395.5 L378.5 386.5" stroke="#f8f8f8" stroke-width=".8"/></svg>
</body></html>
